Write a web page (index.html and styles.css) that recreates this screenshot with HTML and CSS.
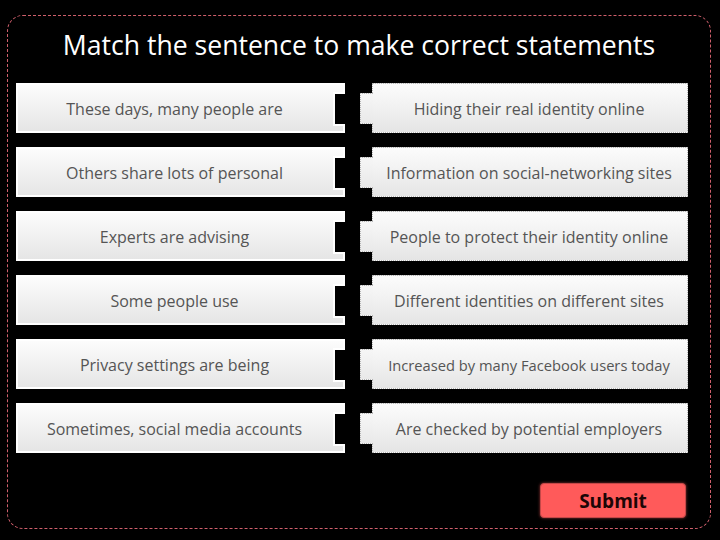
FILE: index.html
```html
<!DOCTYPE html>
<html lang="en">
<head>
    <meta charset="UTF-8">
    <meta name="viewport" content="width=device-width, initial-scale=1.0">
    <title>Match the sentence</title>
    <link rel="stylesheet" href="styles.css">
</head>
<body>
    <div class="frame">
        <h1 class="title">Match the sentence to make correct statements</h1>
        <div class="board">
            <div class="piece left">These days, many people are</div>
            <div class="piece right">Hiding their real identity online</div>

            <div class="piece left">Others share lots of personal</div>
            <div class="piece right">Information on social-networking sites</div>

            <div class="piece left">Experts are advising</div>
            <div class="piece right">People to protect their identity online</div>

            <div class="piece left">Some people use</div>
            <div class="piece right">Different identities on different sites</div>

            <div class="piece left">Privacy settings are being</div>
            <div class="piece right small">Increased by many Facebook users today</div>

            <div class="piece left">Sometimes, social media accounts</div>
            <div class="piece right">Are checked by potential employers</div>
        </div>
        <div class="actions">
            <button type="button" class="submit">Submit</button>
        </div>
    </div>
</body>
</html>
```

FILE: styles.css
```css
body { margin: 0; background: #000; font-family: "Open Sans", "Liberation Sans", sans-serif; }

.frame {
    width: 702px;
    height: 512px;
    margin: 15px 0 0 7px;
    border: 1px dashed #d05f6c;
    border-radius: 16px;
}

.title {
    margin: 11px 0 0;
    font-size: 26.6px;
    font-weight: 400;
    line-height: 36px;
    color: #fff;
    text-align: center;
}

.board {
    display: grid;
    grid-template-columns: 329px 316px;
    column-gap: 27px;
    row-gap: 14px;
    margin: 20px 0 0 8px;
}

.piece {
    position: relative;
    box-sizing: border-box;
    height: 50px;
    padding-top: 2px;
    display: flex;
    align-items: center;
    justify-content: center;
    font-size: 16px;
    color: #555;
    background: linear-gradient(#fcfcfc, #e5e5e5);
}

.piece.left { border: 2px solid #fff; padding-right: 12px; }
.piece.left::after {
    content: "";
    position: absolute;
    right: -2px;
    top: 7px;
    width: 10px;
    height: 30px;
    background: #000;
    border: 2px solid #fff;
    border-right: none;
}

.piece.right { border: 1px dotted #b5b5b5; padding-right: 2px; }
.piece.right::before {
    content: "";
    position: absolute;
    left: -13px;
    top: 9px;
    width: 12px;
    height: 29px;
    background: linear-gradient(#f6f6f6, #e9e9e9);
    border: 1px dotted #b5b5b5;
    border-right: none;
}

.piece.small { font-size: 14.7px; }

.actions { display: flex; justify-content: flex-end; margin: 30px 24px 0 0; }

.submit {
    width: 146px;
    height: 35px;
    padding: 0;
    font-family: inherit;
    font-size: 19px;
    font-weight: 700;
    color: #1c0606;
    background: #ff5a5a;
    border: 1px solid #c44848;
    border-radius: 4px;
    box-shadow: 0 0 3px rgba(255, 90, 90, 0.6);
    cursor: pointer;
}
```
